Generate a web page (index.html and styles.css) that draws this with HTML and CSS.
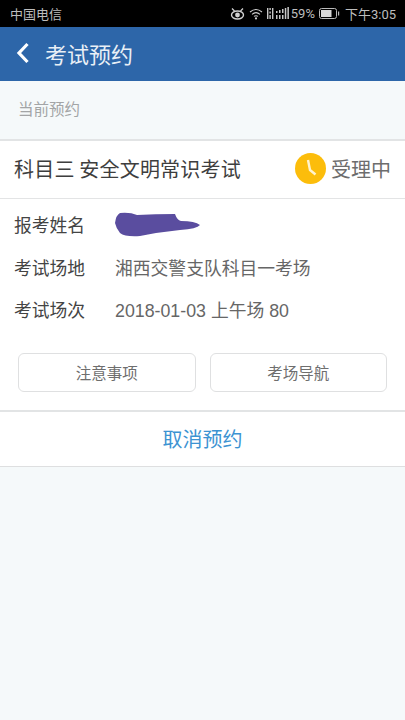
FILE: index.html
```html
<!DOCTYPE html>
<html lang="zh">
<head>
<meta charset="utf-8">
<title>考试预约</title>
<link rel="stylesheet" href="styles.css">
</head>
<body>
<div class="status">
  <span class="carrier">中国电信</span>
  <div class="status-right">
    <svg class="eye" width="15" height="13" viewBox="0 0 15 13"><ellipse cx="7.5" cy="8" rx="6" ry="4" fill="none" stroke="#d0d0d0" stroke-width="1.4"/><circle cx="7.5" cy="8" r="2.4" fill="#d0d0d0"/><path d="M2 1.5L4.5 4M13 1.5L10.5 4" stroke="#d0d0d0" stroke-width="1.3"/></svg>
    <svg class="wifi" width="14" height="12" viewBox="0 0 14 12"><path d="M1 4Q7 -1 13 4M3 6.3Q7 3 11 6.3M5 8.4Q7 7 9 8.4" fill="none" stroke="#d0d0d0" stroke-width="1.1"/><circle cx="7" cy="10.4" r="1.1" fill="#d0d0d0"/></svg>
    <svg class="signal" width="22" height="13" viewBox="0 0 22 13"><g fill="#c8c8c8"><rect x="0" y="1" width="1.4" height="11"/><rect x="2.4" y="1" width="1.4" height="2"/><rect x="2.4" y="4.5" width="1.4" height="2"/><rect x="2.4" y="8" width="1.4" height="4"/><rect x="5" y="1" width="1.4" height="11"/><rect x="9" y="4" width="1.5" height="2"/><rect x="9" y="8" width="1.5" height="4"/><rect x="12" y="3" width="1.5" height="3"/><rect x="12" y="8" width="1.5" height="4"/><rect x="15" y="2" width="1.5" height="4"/><rect x="15" y="8" width="1.5" height="4"/><rect x="17.8" y="1" width="1.5" height="11"/><rect x="20.4" y="0" width="1.5" height="12"/></g></svg>
    <span class="pct">59%</span>
    <svg class="battery" width="21" height="11" viewBox="0 0 21 11"><rect x="0.5" y="0.5" width="17" height="10" rx="2" fill="none" stroke="#bbb"/><rect x="2" y="2" width="10.5" height="7" fill="#d8d8d8"/><rect x="19" y="3.5" width="1.2" height="4" fill="#bbb"/></svg>
    <span class="time">下午3:05</span>
  </div>
</div>
<header class="nav">
  <svg class="back" width="14" height="22" viewBox="0 0 14 22"><path d="M11.5 2L3 11L11.5 20" fill="none" stroke="#fff" stroke-width="3.2"/></svg>
  <h1>考试预约</h1>
</header>
<div class="section-label">当前预约</div>
<main class="card">
  <div class="card-head">
    <span class="subject">科目三 安全文明常识考试</span>
    <div class="state">
      <svg class="clock" width="31" height="31" viewBox="0 0 31 31"><circle cx="15.5" cy="15.5" r="15.5" fill="#fcbd0b"/><path d="M13 7L15 17L20.5 21.5" fill="none" stroke="#fff3cf" stroke-width="2.4"/></svg>
      <span>受理中</span>
    </div>
  </div>
  <div class="rows">
    <div class="row"><span class="key">报考姓名</span>
      <svg class="scribble" width="86" height="26" viewBox="0 0 86 26"><path d="M0 11Q1 3 5 1Q15 0 22 3Q40 2 60 2Q62 8 66 9Q80 9 85 13Q82 17 65 18Q45 20 25 24Q10 25 5 21Q1 16 0 11Z" fill="#5a4d9f"/></svg>
    </div>
    <div class="row"><span class="key">考试场地</span><span class="val">湘西交警支队科目一考场</span></div>
    <div class="row"><span class="key">考试场次</span><span class="val">2018-01-03 上午场 80</span></div>
  </div>
  <div class="btns">
    <button class="btn">注意事项</button>
    <button class="btn">考场导航</button>
  </div>
  <div class="cancel">取消预约</div>
</main>
</body>
</html>
```
FILE: styles.css
```css
* { box-sizing: border-box; }
html, body { margin: 0; padding: 0; }
body {
  width: 405px;
  height: 720px;
  overflow: hidden;
  background: #f5f9fa;
  font-family: "Noto Sans CJK SC", "Liberation Sans", sans-serif;
}
.status {
  height: 27px;
  background: #000;
  color: #bdbdbd;
  font-size: 13px;
  display: flex;
  align-items: center;
  justify-content: space-between;
  padding: 0 9px 0 10px;
}
.status-right { display: flex; align-items: center; gap: 4px; }
.pct, .time { font-family: "Roboto", "Noto Sans CJK SC", sans-serif; }
.time { margin-left: 1px; }
.signal { margin-right: -2px; }
.nav {
  height: 54px;
  background: #2d66a9;
  display: flex;
  align-items: center;
  padding: 0 0 2px 16px;
  gap: 15px;
}
.nav h1 {
  margin: 0;
  color: #e9eff6;
  font-size: 22px;
  font-weight: 400;
}
.section-label {
  height: 58px;
  padding: 0 0 4px 18px;
  display: flex;
  align-items: center;
  color: #a3a5a6;
  font-size: 15.5px;
}
.card {
  background: #fff;
  border-top: 2px solid #e2e4e5;
  border-bottom: 1px solid #dedfe0;
}
.card-head {
  height: 58px;
  border-bottom: 1px solid #e3e4e5;
  display: flex;
  align-items: center;
  justify-content: space-between;
  padding: 0 14px 2px;
}
.subject { font-size: 20px; letter-spacing: 0.2px; color: #3e3e3e; }
.state { display: flex; align-items: center; gap: 5px; color: #6d6d6d; font-size: 20px; }
.rows { display: flex; flex-direction: column; padding-top: 4px; }
.row {
  height: 42.5px;
  display: flex;
  align-items: center;
  padding-left: 14px;
}
.key { width: 101px; font-size: 17.8px; color: #444; }
.val { font-size: 17.8px; color: #666; font-family: "Liberation Sans", "Noto Sans CJK SC", sans-serif; }
.scribble { margin-top: 1px; }
.btns {
  display: flex;
  gap: 14px;
  padding: 22px 18px 18px;
  border-bottom: 2px solid #e2e4e5;
}
.btn {
  flex: 1;
  height: 39px;
  background: #fff;
  border: 1px solid #dfe0e1;
  border-radius: 6px;
  font: inherit;
  font-size: 15.5px;
  color: #6e6e6e;
  padding: 0;
}
.cancel {
  height: 54px;
  display: flex;
  align-items: center;
  justify-content: center;
  padding-bottom: 0;
  color: #3c93d2;
  font-size: 20px;
}
```
